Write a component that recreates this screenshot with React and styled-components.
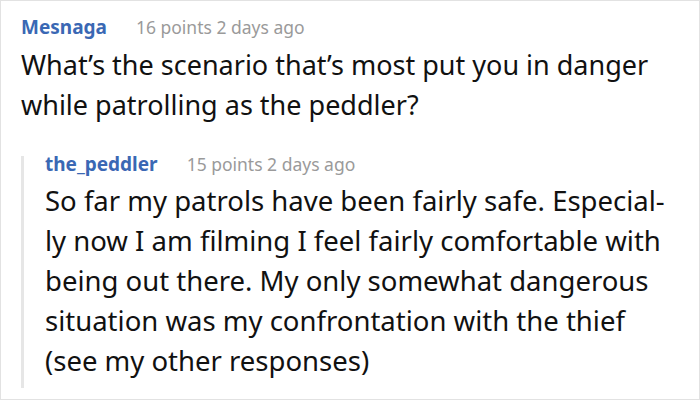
import styled, { createGlobalStyle } from "styled-components";

const GlobalStyle = createGlobalStyle`
    body {
        margin: 0;
        background: #fff;
        font-family: "Noto Sans", "Open Sans", sans-serif;
    }
`;

const Frame = styled.div`
    box-sizing: border-box;
    width: 700px;
    height: 400px;
    border: 1px solid #e2e2e2;
    padding: 14px 10px 0 20px;
    overflow: hidden;
`;

const Header = styled.div`
    display: flex;
    align-items: baseline;
    gap: 29px;
    line-height: ${(p) => p.$lh || 24}px;
`;

const User = styled.span`
    font-size: 19px;
    font-weight: 700;
    color: #3a68b4;
`;

const Meta = styled.span`
    font-size: 17.5px;
    color: #9a9a9a;
`;

const Body = styled.p`
    margin: ${(p) => p.$gap || 6}px 0 0;
    font-size: ${(p) => p.$size || 27}px;
    line-height: 40px;
    color: #111;
    white-space: pre-line;
`;

const Reply = styled.div`
    margin-top: 31px;
    border-left: 3px solid #e6e6e6;
    padding: 0 0 7px 21px;
`;

const Comment = ({ user, meta, children, lh, gap, size }) => (
    <div>
        <Header $lh={lh}>
            <User>{user}</User>
            <Meta>{meta}</Meta>
        </Header>
        <Body $gap={gap} $size={size}>{children}</Body>
    </div>
);

const App = () => {
    return (
        <Frame>
            <GlobalStyle />
            <Comment user="Mesnaga" meta="16 points 2 days ago">
                {"What’s the scenario that’s most put you in danger\nwhile patrolling as the peddler?"}
            </Comment>
            <Reply>
                <Comment user="the_peddler" meta="15 points 2 days ago" lh={16} gap={9} size={27.5}>
                    {"So far my patrols have been fairly safe. Especial-\nly now I am filming I feel fairly comfortable with\nbeing out there. My only somewhat dangerous\nsituation was my confrontation with the thief\n(see my other responses)"}
                </Comment>
            </Reply>
        </Frame>
    );
};

export default App;
